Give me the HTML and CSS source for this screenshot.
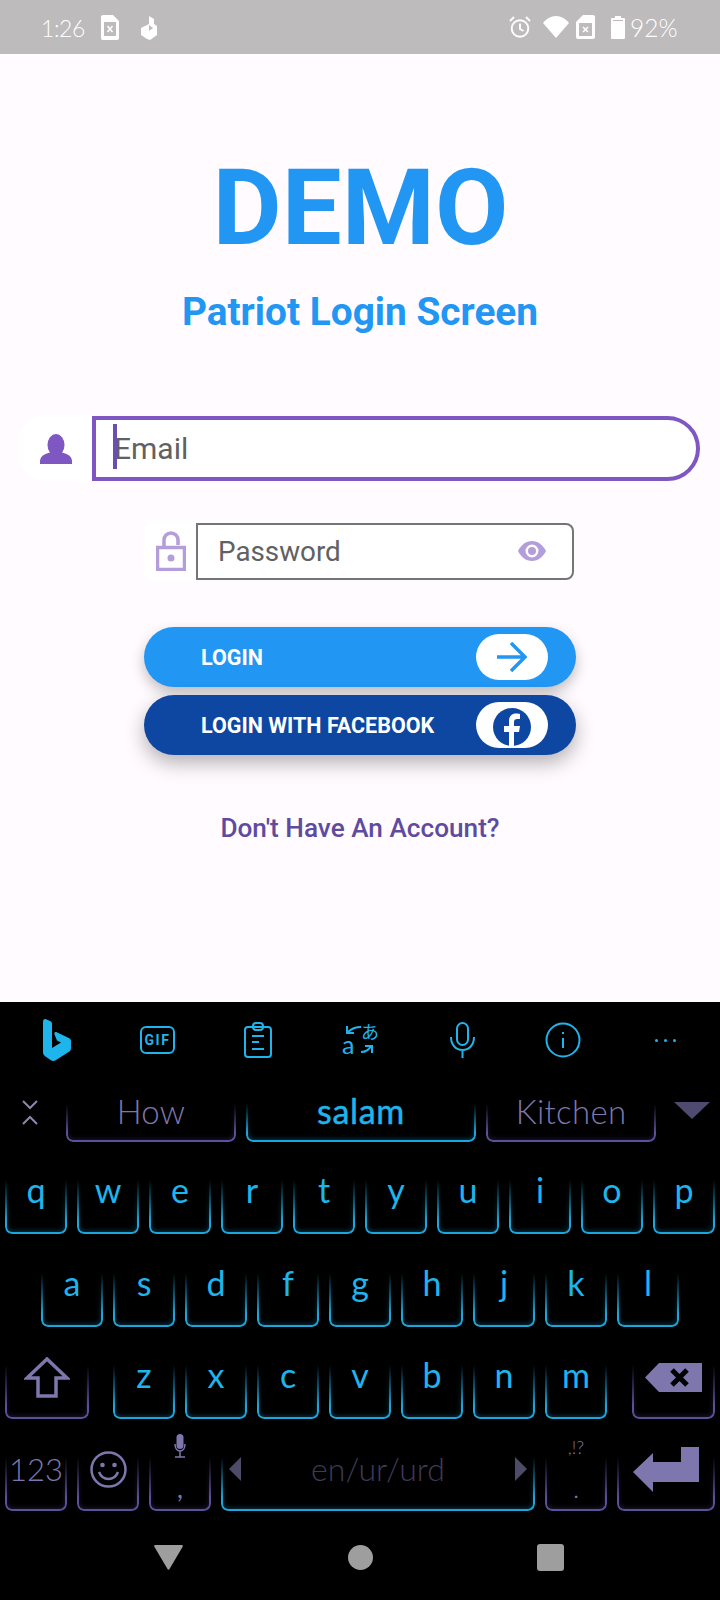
FILE: index.html
```html
<!DOCTYPE html>
<html lang="en">
<head>
<meta charset="utf-8">
<title>Patriot Login Screen</title>
<link rel="stylesheet" href="styles.css">
</head>
<body>
<div class="phone">
  <header class="status">
    <span class="time">1:26</span>
    <svg class="st-sim" viewBox="0 0 18 25"><path class="st-fill" d="M2 0h10l6 6v17a2 2 0 0 1-2 2H2a2 2 0 0 1-2-2V2a2 2 0 0 1 2-2z"/><rect class="st-hole" x="3" y="7" width="12" height="14"/><path class="st-x" d="M6.500 11l5 6M11.500 11l-5 6"/></svg>
    <svg class="st-app" viewBox="0 0 16 24"><path class="st-fill" d="M8 0l5 3v5l3 2v9l-7 5-3-1-6-4v-7l8-4z"/><path class="st-hole" d="M8 9l4 3-4 3z"/></svg>
    <span class="spacer"></span>
    <svg class="st-alarm" viewBox="0 0 22 22"><circle class="st-line" cx="11" cy="12.500" r="8.300"/><path class="st-line" d="M11 7.500v5.500l3.500 2M1 5l4-4M21 5l-4-4"/></svg>
    <svg class="st-wifi" viewBox="0 0 26 22"><path class="st-fill" d="M13 22L0 7C3 3 8 0 13 0s10 3 13 7z"/></svg>
    <svg class="st-sim2" viewBox="0 0 19 24"><path class="st-fill" d="M7 0h10a2 2 0 0 1 2 2v20a2 2 0 0 1-2 2H2a2 2 0 0 1-2-2V7z"/><rect class="st-hole" x="3" y="8" width="13" height="13"/><path class="st-x" d="M7 12l5 5M12 12l-5 5"/></svg>
    <svg class="st-batt" viewBox="0 0 14 23"><path class="st-fill" d="M4 0h6v2h3a1 1 0 0 1 1 1v19a1 1 0 0 1-1 1H1a1 1 0 0 1-1-1V3a1 1 0 0 1 1-1h3z"/><rect class="st-hole" x="2" y="4" width="10" height="1"/></svg>
    <span class="pct">92%</span>
  </header>

  <main class="login">
    <h1 class="demo">DEMO</h1>
    <h2 class="subtitle">Patriot Login Screen</h2>

    <div class="email-row">
      <div class="email-icon">
        <svg class="i-person" viewBox="0 0 32 30"><ellipse cx="16" cy="11" rx="8.500" ry="11"/><path d="M0 30v-3c0-6 8-9 16-9s16 3 16 9v3z"/></svg>
      </div>
      <div class="email-field"><span class="caret"></span><span>Email</span></div>
    </div>

    <div class="pass-row">
      <div class="pass-icon">
        <svg class="i-lock" viewBox="0 0 30 40"><rect x="1.500" y="16.500" width="27" height="22" class="lock-line"/><path class="lock-line" d="M8 16V9a7 7 0 0 1 14 0v5"/><circle class="lock-dot" cx="15" cy="27" r="3.500"/></svg>
      </div>
      <div class="pass-field">
        <span>Password</span>
        <svg class="i-eye" viewBox="0 0 28 20"><path class="lock-dot" fill-rule="evenodd" d="M14 0c6 0 11 4 14 10-3 6-8 10-14 10S3 16 0 10C3 4 8 0 14 0zm0 3.500a6.500 6.500 0 1 0 0 13 6.500 6.500 0 0 0 0-13zM14 6a4 4 0 1 1 0 8 4 4 0 0 1 0-8z"/></svg>
      </div>
    </div>

    <button class="btn btn-login">
      <span>LOGIN</span>
      <span class="pill"><svg class="i-arrow" viewBox="0 0 30 30"><path d="M0 15h28M14 1l14 14-14 14"/></svg></span>
    </button>
    <button class="btn btn-fb">
      <span>LOGIN WITH FACEBOOK</span>
      <span class="pill"><svg class="i-fb" viewBox="0 0 40 40"><circle class="fb-disc" cx="20" cy="20" r="19"/><path class="fb-f" d="M17 40V25h-5v-6h5v-5c0-5 3-7.500 7-7.500 2 0 3.500.3 4 .4v5h-2.500c-2.500 0-3.500 1-3.500 3V19h6l-1 6h-5v15z"/></svg></span>
    </button>

    <p class="account">Don't Have An Account?</p>
  </main>

  <section class="keyboard">
    <div class="toolbar">
      <svg class="tb tb-bing" viewBox="0 0 28 42"><path d="M0 3c0-2.500 1.500-3.500 3.500-2.500L7 2c1.500.7 2 1.500 2 3v24l9-5.500-4-2-2.500-6c-.7-2 .5-3 2.300-2.200l12 5.700c1.500.7 2.200 1.700 2.200 3.500V29c0 2-.7 3-2 3.800L13 41c-2 1.300-3.500 1.300-5.500 0l-5-3.500C.7 36.300 0 35 0 33z"/></svg>
      <svg class="tb tb-gif" viewBox="0 0 35 28"><rect class="tb-line" x="1" y="1" width="33" height="26" rx="5"/><text class="gif-text" x="17.500" y="19">GIF</text></svg>
      <svg class="tb tb-clip" viewBox="0 0 28 36"><rect class="tb-line" x="1" y="5" width="26" height="30" rx="3"/><rect class="tb-line" x="9" y="1" width="10" height="7" rx="3"/><path class="tb-line" d="M8 14h12M8 20h7M8 27h12"/></svg>
      <svg class="tb tb-trans" viewBox="0 0 36 34"><path class="tb-line" d="M19 4C14 4 9 6 6 9M5 3v7h7M19 29c4 0 8-2 10-6M23 23h7v7"/><text class="tr-a" x="0" y="31">a</text><text class="tr-j" x="19" y="16">あ</text></svg>
      <svg class="tb tb-mic" viewBox="0 0 25 36"><rect class="tb-line" x="7" y="1" width="11" height="22" rx="5.500"/><path class="tb-line" d="M1 15c0 8 5 13 11.500 13S24 23 24 15M12.500 28v8"/></svg>
      <svg class="tb tb-info" viewBox="0 0 36 36"><circle class="tb-line" cx="18" cy="18" r="16.500"/><path class="tb-line" d="M18 16v10M18 10v2"/></svg>
      <span class="tb-dots"><i></i><i></i><i></i></span>
    </div>

    <div class="suggest">
      <svg class="s-collapse" viewBox="0 0 16 25"><path d="M1 1l7 7 7-7M1 24l7-7 7 7"/></svg>
      <div class="key sg sg-side purple"><span>How</span></div>
      <div class="key sg sg-mid"><span>salam</span></div>
      <div class="key sg sg-side purple"><span>Kitchen</span></div>
      <svg class="s-down" viewBox="0 0 36 17"><path d="M0 0h36L18 17z"/></svg>
    </div>

    <div class="row">
      <div class="key"><span>q</span></div><div class="key"><span>w</span></div><div class="key"><span>e</span></div><div class="key"><span>r</span></div><div class="key"><span>t</span></div><div class="key"><span>y</span></div><div class="key"><span>u</span></div><div class="key"><span>i</span></div><div class="key"><span>o</span></div><div class="key"><span>p</span></div>
    </div>
    <div class="row row-home">
      <div class="key"><span>a</span></div><div class="key"><span>s</span></div><div class="key"><span>d</span></div><div class="key"><span>f</span></div><div class="key"><span>g</span></div><div class="key"><span>h</span></div><div class="key"><span>j</span></div><div class="key"><span>k</span></div><div class="key"><span>l</span></div>
    </div>
    <div class="row">
      <div class="key purple k-shift"><svg class="i-shift" viewBox="0 0 46 41"><path d="M23 2L3 21h11v18h18V21h11z"/></svg></div>
      <div class="key"><span>z</span></div><div class="key"><span>x</span></div><div class="key"><span>c</span></div><div class="key"><span>v</span></div><div class="key"><span>b</span></div><div class="key"><span>n</span></div><div class="key"><span>m</span></div>
      <div class="key purple k-back"><svg class="i-back" viewBox="0 0 57 29"><path class="g-fill" d="M14 0h43v29H14L0 14.500z"/><path class="g-x" d="M27 7l15 15M42 7L27 22"/></svg></div>
    </div>
    <div class="row">
      <div class="key purple k-num"><span>123</span></div>
      <div class="key purple k-emoji"><svg class="i-smile" viewBox="0 0 37 37"><circle cx="18.500" cy="18.500" r="17"/><path d="M9 21c2 5 5 7 9.500 7s7.500-2 9.500-7"/><circle class="g-fill" cx="12.500" cy="14" r="2.300"/><circle class="g-fill" cx="24.500" cy="14" r="2.300"/></svg></div>
      <div class="key purple k-comma"><svg class="i-keymic" viewBox="0 0 12 24"><rect class="g-fill" x="2.500" y="0" width="7" height="15" rx="3.500"/><path class="mic-line" d="M1 10c0 4 2 7 5 7s5-3 5-7M6 17v6M1 23h10"/></svg><span>,</span></div>
      <div class="key k-space">
        <svg class="i-tri" viewBox="0 0 12 24"><path d="M12 0v24L0 12z"/></svg>
        <span>en/ur/urd</span>
        <svg class="i-tri" viewBox="0 0 12 24"><path d="M0 0v24l12-12z"/></svg>
      </div>
      <div class="key purple k-period"><small>,!?</small><span>.</span></div>
      <div class="key purple k-enter"><svg class="i-enter" viewBox="0 0 66 45"><path class="g-fill" d="M0 25L20 6v9h28V0h18v35H20v10z"/></svg></div>
    </div>

    <nav class="nav">
      <svg class="n-back" viewBox="0 0 29 25"><path d="M1 0h27c1 0 1 1 .5 2L15.500 24c-.5 1-1.500 1-2 0L.5 2C0 1 0 0 1 0z"/></svg>
      <span class="n-home"></span>
      <span class="n-recent"></span>
    </nav>
  </section>
</div>
</body>
</html>
```

FILE: styles.css
```css
* { box-sizing: border-box; }
html, body { margin: 0; padding: 0; }
body { width: 720px; height: 1600px; overflow: hidden; font-family: Roboto, "Liberation Sans", sans-serif; }
.phone { width: 720px; height: 1600px; display: flex; flex-direction: column; background: #fffbff; }

/* status bar */
.status { height: 54px; background: #bdbbbb; display: flex; align-items: center; padding-left: 41px; color: #fff; flex: none; font-family: Lato, Roboto, sans-serif; }
.time { font-size: 23px; font-weight: 300; width: 60px; letter-spacing: -.4px; padding-top: 2px; }
.pct { font-size: 24.500px; font-weight: 300; margin-left: 5px; width: 90px; padding-top: 1px; }
.spacer { flex: 1; }
.st-fill { fill: #fff; }
.st-hole { fill: #bdbbbb; }
.st-x { stroke: #fff; stroke-width: 1.600; fill: none; }
.st-line { stroke: #fff; stroke-width: 2; fill: none; }
.st-sim { width: 18px; height: 25px; margin-top: 1px; }
.st-app { width: 16px; height: 24px; margin-left: 22px; margin-top: 1px; }
.st-alarm { width: 22px; height: 22px; }
.st-wifi { width: 26px; height: 22px; margin-left: 12px; margin-top: -1px; }
.st-sim2 { width: 19px; height: 24px; margin-left: 7px; margin-top: -1px; }
.st-batt { width: 14px; height: 23px; margin-left: 16px; }

/* login */
.login { height: 948px; flex: none; display: flex; flex-direction: column; align-items: flex-start; }
.demo { align-self: center; margin: 93px 0 0 1px; height: 122px; line-height: 122px; font-size: 106.500px; font-weight: 700; color: #2196f3; }
.subtitle { align-self: center; margin: 20px 0 0; height: 46px; line-height: 46px; font-size: 38.800px; font-weight: 700; color: #2196f3; }
.email-row { display: flex; align-items: center; margin: 79px 0 0 18px; height: 68px; }
.email-icon { width: 74px; height: 68px; background: #fff; border-radius: 30px 0 0 30px; display: flex; align-items: center; justify-content: center; }
.i-person { width: 32px; height: 30px; fill: #7e57c2; margin-left: 2px; margin-top: 2px; }
.email-field { width: 608px; height: 65px; background: #fff; border: 4px solid #7e57c2; border-radius: 0 33px 33px 0; display: flex; align-items: center; padding-left: 18px; font-size: 30px; color: #616161; position: relative; }
.caret { width: 3.500px; height: 45px; background: #6a4eb0; position: absolute; left: 17px; top: 4px; }
.pass-row { display: flex; align-items: center; margin: 38px 0 0 143px; height: 62px; }
.pass-icon { width: 53px; height: 62px; background: #fff; border-radius: 14px 0 0 14px; display: flex; align-items: center; justify-content: center; }
.i-lock { width: 30px; height: 40px; margin-left: 2px; }
.lock-line { fill: none; stroke: #b39ddb; stroke-width: 3.500; }
.lock-dot { fill: #b39ddb; }
.pass-field { width: 378px; height: 57px; background: #fff; border: 2px solid #757575; border-radius: 0 8px 8px 0; display: flex; align-items: center; justify-content: space-between; padding: 0 26px 0 20px; font-size: 27.800px; color: #616161; }
.i-eye { width: 28px; height: 20px; }
.btn { width: 432px; height: 60px; margin-left: 144px; border: 0; border-radius: 30px; display: flex; align-items: center; justify-content: space-between; padding: 0 28px 0 57px; font-family: inherit; font-size: 21.500px; font-weight: 700; color: #fff; }
.btn-login { margin-top: 45px; background: #2196f3; box-shadow: 0 6px 14px rgba(0,0,0,.25); }
.btn-fb { margin-top: 8px; background: #0d47a1; box-shadow: 0 8px 20px rgba(0,0,0,.3); position: relative; }
.pill { width: 72px; height: 46px; background: #fff; border-radius: 23px; display: flex; align-items: center; justify-content: center; overflow: hidden; }
.i-arrow { width: 30px; height: 30px; fill: none; stroke: #2196f3; stroke-width: 3.500; }
.i-fb { width: 40px; height: 40px; margin-top: 3px; }
.fb-disc { fill: #0d47a1; }
.fb-f { fill: #fff; }
.account { align-self: center; margin: 58px 0 0; font-size: 26.200px; line-height: 30px; font-weight: 500; color: #5e4ba0; }

/* keyboard */
.keyboard { flex: 1; background: #000; font-family: Lato, "Open Sans", sans-serif; color: #1eb4ec; display: flex; flex-direction: column; }
.toolbar { height: 76px; display: flex; align-items: center; flex: none; padding-left: 43px; }
.tb { overflow: visible; }
.tb-line { fill: none; stroke: #1eb4ec; stroke-width: 2; }
.tb-bing { width: 28px; height: 42px; fill: #1eb4ec; }
.tb-gif { width: 35px; height: 28px; margin-left: 69px; }
.gif-text { fill: #1eb4ec; font: 700 14px Roboto, sans-serif; text-anchor: middle; letter-spacing: 1.500px; }
.tb-clip { width: 28px; height: 36px; margin-left: 69px; }
.tb-trans { width: 36px; height: 34px; margin-left: 70px; }
.tr-a { fill: #1eb4ec; font: 400 25px Lato, sans-serif; }
.tr-j { fill: #1eb4ec; font: 400 18px "Noto Sans CJK JP", sans-serif; }
.tb-mic { width: 25px; height: 36px; margin-left: 72px; }
.tb-info { width: 36px; height: 36px; margin-left: 70px; }
.tb-dots { display: flex; gap: 6px; margin-left: 74px; }
.tb-dots i { width: 3px; height: 3px; border-radius: 50%; background: #1eb4ec; }

.key { position: relative; width: 62px; height: 88px; display: flex; align-items: center; justify-content: flex-end; flex-direction: column; font-size: 34px; padding-bottom: 24px; }
.key::before { content: ""; position: absolute; inset: 34px 0 0 0; border: solid #1ba7dc; border-width: 0 2px 2px; border-radius: 0 0 7px 7px; box-shadow: 0 1px 6px rgba(30,180,236,.45), inset 0 -1px 5px rgba(30,180,236,.3); -webkit-mask-image: linear-gradient(to bottom, transparent 0, rgba(0,0,0,.5) 40%, #000 75%); mask-image: linear-gradient(to bottom, transparent 0, rgba(0,0,0,.5) 40%, #000 75%); }
.key.purple { color: #7d77ad; }
.key.purple::before { border-color: #5d4f9b; box-shadow: 0 1px 6px rgba(93,79,155,.45), inset 0 -1px 5px rgba(93,79,155,.3); }

.suggest { height: 64px; flex: none; display: flex; align-items: flex-end; padding: 0 10px 0 22px; }
.s-collapse { width: 16px; height: 25px; fill: none; stroke: #8c88ac; stroke-width: 2; margin-bottom: 17px; margin-right: 28px; flex: none; }
.sg { height: 60px; font-size: 33px; padding-bottom: 11px; }
.sg::before { inset: 22px 0 0 0; }
.sg-side { width: 170px; font-weight: 300; letter-spacing: .3px; }
.sg-mid { width: 230px; margin: 0 10px; font-weight: 400; font-size: 34px; letter-spacing: .7px; -webkit-text-stroke: .5px #1eb4ec; }
.s-down { width: 36px; height: 17px; fill: #4f4b70; margin: 0 0 23px 18px; flex: none; }

.row { height: 92.330px; flex: none; display: flex; align-items: flex-end; gap: 10px; padding-left: 5px; }
.row-home { padding-left: 41px; }
.k-shift { width: 84px; margin-right: 14px; padding-bottom: 21px; }
.i-shift { width: 46px; height: 41px; fill: none; stroke: #7d77ad; stroke-width: 3.500; }
.k-back { width: 83px; margin-left: 15px; padding-bottom: 27px; }
.i-back { width: 57px; height: 29px; }
.g-fill { fill: #7d77ad; }
.g-x { stroke: #000; stroke-width: 5; fill: none; }
.k-num { font-size: 31px; font-weight: 300; padding-bottom: 23px; }
.k-emoji { padding-bottom: 23px; }
.i-smile { width: 37px; height: 37px; fill: none; stroke: #7d77ad; stroke-width: 2.500; }
.i-smile .g-fill { stroke: none; }
.k-comma { padding-bottom: 8px; font-size: 26px; justify-content: space-between; padding-top: 11px; }
.k-comma span { line-height: 30px; }
.i-keymic { width: 12px; height: 24px; }
.mic-line { fill: none; stroke: #7d77ad; stroke-width: 1.500; }
.k-space { width: 314px; flex-direction: row; justify-content: space-between; padding: 0 8px 22px; align-items: flex-end; color: #3f3a58; font-size: 32px; font-weight: 300; }
.k-space span { line-height: 40px; }
.i-tri { width: 12px; height: 24px; fill: #4d4b68; margin-bottom: 8px; }
.k-period { justify-content: space-between; padding: 0 0 10px; font-size: 20px; }
.k-period small { font-size: 18px; font-weight: 300; line-height: 20px; margin-top: 14px; }
.k-period span { line-height: 22px; }
.k-enter { width: 98px; padding-bottom: 19px; }
.i-enter { width: 66px; height: 45px; }

.nav { flex: 1; display: flex; align-items: center; padding: 4px 156px 0 154px; justify-content: space-between; }
.n-back { width: 29px; height: 25px; fill: #9e9e9e; }
.n-home { width: 25px; height: 25px; border-radius: 50%; background: #9e9e9e; }
.n-recent { width: 27px; height: 27px; border-radius: 3px; background: #9e9e9e; }
```
